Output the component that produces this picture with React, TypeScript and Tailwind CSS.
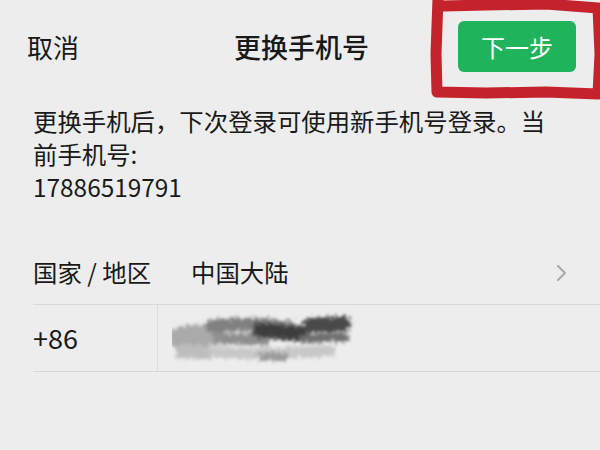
export default function App() {
  return (
    <div
      className="relative w-[600px] h-[450px] overflow-hidden bg-[#ededed] text-[#191919]"
      style={{ fontFamily: '"Noto Sans CJK SC", "Noto Sans", sans-serif' }}
    >
      {/* header */}
      <div className="grid grid-cols-[1fr_auto_1fr] items-center h-[93px] pl-[27px] pr-[24px]">
        <span className="text-[26px] leading-none">取消</span>
        <span className="text-[27px] leading-none font-medium">更换手机号</span>
        <button className="justify-self-end w-[118px] h-[51px] rounded-[6px] bg-[#1fb35b] text-white text-[24px] leading-none">
          下一步
        </button>
      </div>

      {/* description */}
      <p className="pl-[33px] w-[565px] pt-[11px] text-[24.4px] leading-[33px]">
        更换手机后，下次登录可使用新手机号登录。当前手机号:
        <br />
        17886519791
      </p>

      {/* rows */}
      <div className="ml-[33px] mt-[38px]">
        <div className="flex items-center h-[64px] border-b border-[#d8d8d8] pr-[33px]">
          <span className="w-[158px] text-[24.4px]">国家 / 地区</span>
          <span className="flex-1 text-[24.4px]">中国大陆</span>
          <svg width="11" height="18" viewBox="0 0 11 18" fill="none" stroke="#aaaaaa" strokeWidth="2.2" strokeLinecap="round" strokeLinejoin="round">
            <path d="M2 2l7 7-7 7" />
          </svg>
        </div>
        <div className="flex items-stretch h-[67px] border-b border-[#d8d8d8]">
          <span className="w-[124px] flex items-center text-[27px]">+86</span>
          <div className="border-l border-[#dcdcdc] flex items-center pl-[14px]">
            <Scribble />
          </div>
        </div>
      </div>

      {/* red annotation frame */}
      <svg className="absolute left-[426px] top-[-6px]" width="180" height="112" viewBox="0 0 180 112" fill="none">
        <path
          d="M12 4 L10 60 L11 98 L60 99 L120 98 L172 100 L174 60 L172 14 L120 10 L60 11 L18 12"
          stroke="#c5232b"
          strokeWidth="11"
          strokeLinecap="round"
          strokeLinejoin="round"
        />
      </svg>
    </div>
  );
}

// blurred redaction over the phone number
function Scribble() {
  return (
    <svg width="184" height="56" viewBox="0 0 184 56">
      <defs>
        <filter id="grain" x="-10%" y="-40%" width="120%" height="180%">
          <feTurbulence type="fractalNoise" baseFrequency="0.35" numOctaves="3" seed="7" result="noise" />
          <feDisplacementMap in="SourceGraphic" in2="noise" scale="12" xChannelSelector="R" yChannelSelector="G" result="d" />
          <feGaussianBlur in="d" stdDeviation="1.4" />
        </filter>
      </defs>
      <g filter="url(#grain)" strokeLinecap="round">
        <path d="M8 28 L40 24" stroke="#aaaaaa" strokeWidth="22" />
        <path d="M10 42 L36 42" stroke="#bdbdbd" strokeWidth="14" />
        <path d="M40 16 L84 14 L118 18" stroke="#808080" strokeWidth="13" />
        <path d="M46 28 L92 30" stroke="#8e8e8e" strokeWidth="11" />
        <path d="M88 20 L130 24" stroke="#3e3e3e" strokeWidth="15" />
        <path d="M138 15 L172 14" stroke="#4a4a4a" strokeWidth="15" />
        <path d="M132 29 L172 27" stroke="#707070" strokeWidth="9" />
        <path d="M42 42 L84 44 L158 41" stroke="#c8c8c8" strokeWidth="11" />
        <path d="M90 46 L112 47" stroke="#9a9a9a" strokeWidth="8" />
      </g>
    </svg>
  );
}
